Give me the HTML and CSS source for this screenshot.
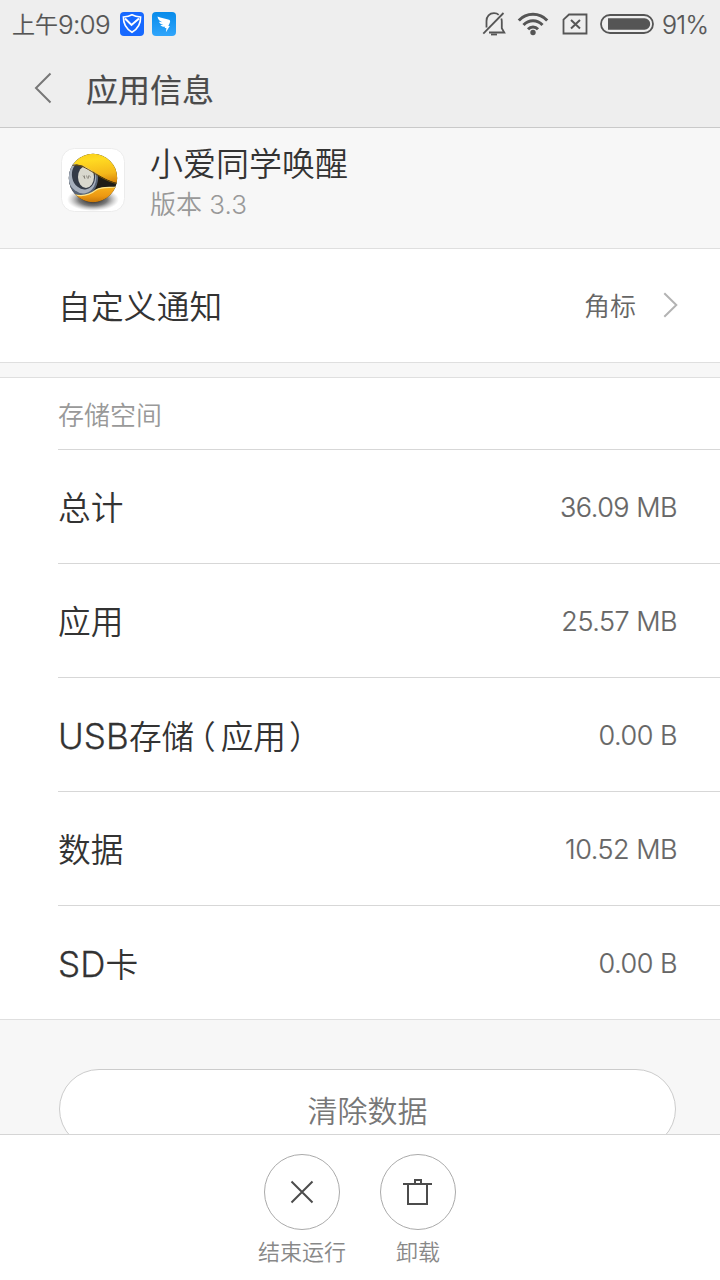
FILE: index.html
```html
<!DOCTYPE html>
<html lang="zh-CN">
<head>
<meta charset="utf-8">
<title>应用信息</title>
<link rel="stylesheet" href="styles.css">
</head>
<body>
<div class="screen">
  <header class="top">
    <div class="status">
      <div class="clock"><span>上午</span><span class="clock-digits">9:09</span></div>
      <svg class="badge-icon" width="24" height="24" viewBox="0 0 24 24">
        <rect width="24" height="24" rx="4" fill="#1769ff"/>
        <path d="M12 2.800c2.800 1.600 5.400 2 8.600 2.200c.2 7-2.300 11.500-8.600 15.300C5.700 16.500 3.200 12 3.400 5C6.600 4.800 9.200 4.400 12 2.800z" fill="none" stroke="#fff" stroke-width="1.600"/>
        <path d="M5 6.500l6.500 6.500l7.500-6.500" fill="none" stroke="#fff" stroke-width="2"/>
      </svg>
      <svg class="badge-icon" width="24" height="24" viewBox="0 0 24 24">
        <defs><linearGradient id="wing" x2="0" y2="1"><stop stop-color="#078bea"/><stop offset="1" stop-color="#30a5fb"/></linearGradient></defs>
        <rect width="24" height="24" rx="4" fill="url(#wing)"/>
        <path d="M5.500 4.500c3.500 1.400 8 2.200 11.500 3.200c1.500.6 1.300 2 .7 3.300l-1.400 3h1.500l-3.900 6.200l.5-4.100h-1.800l.6-1.300c-2.300.3-3.900-.5-4.800-1.800l3-.2c-2.300-.4-3.900-1.400-4.500-3l3.400.5C7.500 8.900 5.700 7.200 5.500 4.500z" fill="#fff"/>
      </svg>
      <div class="indicators">
        <svg width="24" height="26" viewBox="0 0 24 26" fill="none" stroke="#555" stroke-width="1.800">
          <path d="M4.500 16.500V10c0-4.800 3-7.800 7.500-7.800c2 0 3.500.5 4.700 1.600M19.300 7.500c.4 1 .5 2 .5 3.200v6.500l2.500 4.300H7"/>
          <path d="M1.300 22.700L21.500 2"/><path d="M9 23.500h6" stroke-width="1.800"/>
        </svg>
        <svg width="32" height="24" viewBox="0 0 32 24" fill="none" stroke="#555" stroke-width="3">
          <path d="M1.800 8.500C9.500.3 22.500.3 30.200 8.500"/><path d="M6.500 13c5.300-5.600 13.700-5.600 19 0"/><path d="M11 17.200c2.700-2.800 7.300-2.800 10 0"/>
          <circle cx="16" cy="20.500" r="2.700" fill="#555" stroke="none"/>
        </svg>
        <svg width="26" height="22" viewBox="0 0 26 22" fill="none" stroke="#555" stroke-width="1.800">
          <path d="M7 1.500h17.500v19H1.500V6.700z"/><path d="M9 7l9 8.500M18 7l-9 8.500" stroke-width="2"/>
        </svg>
        <svg width="54" height="20" viewBox="0 0 54 20">
          <rect x="1" y="1" width="52" height="18" rx="9" fill="none" stroke="#555" stroke-width="1.800"/>
          <path d="M8 4.300h36.500a5.700 5.700 0 0 1 0 11.400H8z" fill="#555"/>
        </svg>
        <span class="percent">91%</span>
      </div>
    </div>
    <div class="titlebar">
      <svg width="18" height="32" viewBox="0 0 18 32" fill="none" stroke="#777" stroke-width="2"><path d="M16.500 1.500L2 16l14.500 14.500"/></svg>
      <h1>应用信息</h1>
    </div>
  </header>

  <main class="content">
    <section class="app">
      <svg class="app-icon" width="64" height="64" viewBox="0 0 64 64">
        <defs>
          <linearGradient id="shell" x1=".4" x2=".6" y2="1"><stop stop-color="#f8cb18"/><stop offset=".3" stop-color="#ffdb22"/><stop offset=".75" stop-color="#f5b81a"/><stop offset="1" stop-color="#dc8b0c"/></linearGradient>
          <linearGradient id="jaw" x2="0" y2="1"><stop stop-color="#f7b11c"/><stop offset=".5" stop-color="#ec9812"/><stop offset="1" stop-color="#b96a06"/></linearGradient>
          <radialGradient id="shade"><stop stop-color="#111"/><stop offset=".55" stop-color="#333" stop-opacity=".65"/><stop offset="1" stop-color="#888" stop-opacity="0"/></radialGradient>
          <clipPath id="ball"><circle cx="32" cy="30" r="24.200"/></clipPath>
        </defs>
        <rect x=".5" y=".5" width="63" height="63" rx="13" fill="#fff" stroke="#ececec"/>
        <ellipse cx="32" cy="51.500" rx="26" ry="11.500" fill="url(#shade)"/>
        <g clip-path="url(#ball)">
          <rect x="7" y="5" width="50" height="50" fill="#201d17"/>
          <ellipse cx="19" cy="29" rx="18" ry="20" fill="#596475" transform="rotate(-12 19 29)"/>
          <ellipse cx="21" cy="28.500" rx="14" ry="17" fill="#a6afbc" transform="rotate(-12 21 28.500)"/>
          <ellipse cx="22.500" cy="27.500" rx="11.500" ry="14" fill="#343b47" transform="rotate(-12 22.500 27.500)"/>
          <ellipse cx="25" cy="29" rx="8" ry="11" fill="#d9d8ce"/>
          <path d="M22 27.500l2 3m-.5-3v3m2-3l1 3m1-3v3m1-3l1 2" stroke="#77736a" stroke-width=".7"/>
          <path d="M8 17C25 12 34 30 57 35V2H8z" fill="url(#shell)"/>
          <path d="M8 18C25 13 34 31 57 36" fill="none" stroke="#6d4c07" stroke-width="1"/>
          <path d="M10 45c12 5 20 1 25-3c6-4 13-2 21-3v18H10z" fill="url(#jaw)"/>
          <path d="M11 46c12 4 19 0 24-4c6-4 13-2 21-3" fill="none" stroke="#ffe78e" stroke-width="1.200"/>
        </g>
      </svg>
      <div class="app-text">
        <div class="app-name">小爱同学唤醒</div>
        <div class="version">版本 <span class="version-num">3.3</span></div>
      </div>
    </section>

    <section class="notify">
      <span class="label">自定义通知</span>
      <span class="hint">角标</span>
      <svg width="15" height="26" viewBox="0 0 15 26" fill="none" stroke="#b3b3b3" stroke-width="2"><path d="M1.300 1.300L13.300 13L1.300 24.700"/></svg>
    </section>
    <div class="gap"></div>

    <section class="storage">
      <h2>存储空间</h2>
      <div class="row"><span class="label">总计</span><span class="value">36.09 MB</span></div>
      <div class="row"><span class="label">应用</span><span class="value">25.57 MB</span></div>
      <div class="row"><span class="label"><span class="latin">USB</span>存储<span class="open">（</span>应用<span class="close">）</span></span><span class="value">0.00 B</span></div>
      <div class="row"><span class="label">数据</span><span class="value">10.52 MB</span></div>
      <div class="row"><span class="label"><span class="latin">SD</span>卡</span><span class="value">0.00 B</span></div>
    </section>

    <section class="clear"><div class="clear-button">清除数据</div></section>
  </main>

  <footer class="actions">
    <div class="action">
      <svg width="76" height="76" viewBox="0 0 76 76" fill="none"><circle cx="38" cy="38" r="37.500" stroke="#aaa"/><path d="M27.500 27.500l21 21M48.500 27.500l-21 21" stroke="#4c4c4c" stroke-width="2"/></svg>
      <span>结束运行</span>
    </div>
    <div class="action">
      <svg width="76" height="76" viewBox="0 0 76 76" fill="none"><circle cx="38" cy="38" r="37.500" stroke="#aaa"/><path d="M23 30h29M28 30v20h19V30M35 29.500V26h6v3.500" stroke="#4c4c4c" stroke-width="2"/></svg>
      <span>卸载</span>
    </div>
  </footer>
</div>
</body>
</html>
```
FILE: styles.css
```css
* { box-sizing: border-box; }
body { margin: 0; }
svg { display: block; flex: none; }
.screen {
  width: 720px; height: 1280px; overflow: hidden;
  display: flex; flex-direction: column;
  background: #fff; color: #333;
  font-family: Inter, "Noto Sans CJK SC", sans-serif;
  font-weight: 350; white-space: nowrap;
}
.top { height: 128px; background: #eee; border-bottom: 1px solid #c9c9c9; color: #4b4b4b; }
.status { height: 48px; display: flex; align-items: center; padding: 0 13px 0 12px; }
.clock { width: 108px; display: flex; align-items: center; font-size: 23px; line-height: 48px; padding-top: 2px; color: #555; -webkit-text-stroke: .2px #555; }
.clock-digits { font-size: 26px; letter-spacing: -.7px; }
.badge-icon { margin-right: 8px; }
.indicators { margin-left: auto; display: flex; align-items: center; color: #555; }
.indicators svg { margin-right: 12px; }
.indicators svg:nth-child(2) { margin-left: -1px; margin-right: 13px; }
.indicators svg:nth-child(4) { margin-right: 8px; }
.percent { width: 45px; font-size: 25px; line-height: 48px; letter-spacing: -.7px; padding-top: 2px; -webkit-text-stroke: .2px #555; }
.titlebar { height: 79px; display: flex; align-items: center; padding: 1px 0 0 34px; }
.titlebar h1 { margin: 5px 0 0 34px; font-size: 32px; line-height: 40px; font-weight: 400; -webkit-text-stroke: .2px #4b4b4b; }
.content { flex: 1; min-height: 0; overflow: hidden; background: #f7f7f7; }
.app { height: 121px; display: flex; padding: 20px 0 0 61px; border-bottom: 1px solid #dfdfdf; }
.app-text { padding-left: 25px; }
.app-name { font-size: 33px; line-height: 40px; margin-top: -4px; }
.version { font-size: 26px; line-height: 40px; color: #999; margin-top: 1px; }
.label { font-size: 32.700px; line-height: 44px; padding-top: 3px; }
.notify { height: 114px; display: flex; align-items: center; padding: 0 42px 0 58px; background: #fff; border-bottom: 1px solid #dfdfdf; }
.notify .label { letter-spacing: .2px; }
.hint { margin-left: auto; margin-right: 27px; font-size: 26px; color: #666; margin-top: -2px; }
.notify svg { margin-top: -1px; }
.gap { height: 15px; border-bottom: 1px solid #dfdfdf; }
.storage { background: #fff; padding-left: 58px; border-bottom: 1px solid #dfdfdf; }
.storage h2 { margin: 0; height: 71px; line-height: 75px; font-size: 26px; font-weight: 350; color: #999; }
.row { height: 114px; display: flex; align-items: center; justify-content: space-between; border-top: 1px solid #d7d7d7; padding-right: 43px; }
.value { font-size: 27px; color: #666; letter-spacing: -.5px; padding-top: 1px; -webkit-text-stroke: .2px #666; }
.latin { font-size: 35px; letter-spacing: .1px; -webkit-text-stroke: .3px #333; }
.open, .close { font-feature-settings: "halt"; }
.open { margin: 0 5px 0 5px; }
.close { margin-left: 3px; }
.clear { padding: 49px 44px 0 59px; }
.clear-button { height: 80px; border: 1px solid #ccc; border-radius: 40px; background: #fff; color: #777; font-size: 30px; line-height: 82px; text-align: center; }
.actions { height: 146px; border-top: 1px solid #d5d5d5; display: flex; justify-content: center; gap: 28px; padding-top: 19px; }
.action { width: 88px; display: flex; flex-direction: column; align-items: center; font-size: 22px; line-height: 32px; color: #888; }
.action span { margin-top: 6px; }
```
